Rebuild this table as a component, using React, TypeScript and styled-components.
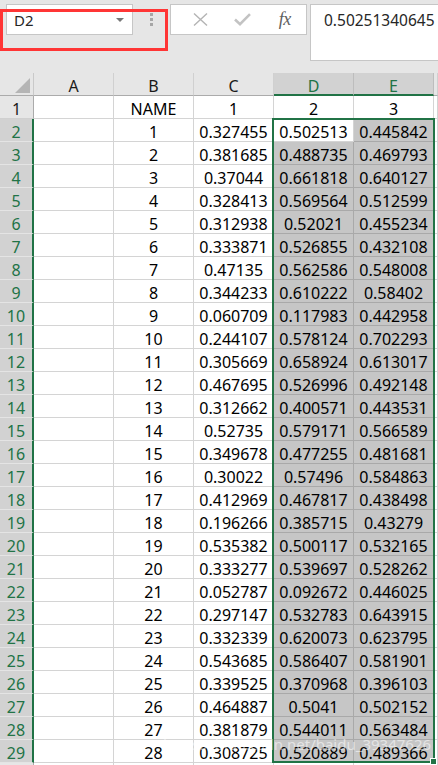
import React from "react";
import styled, { createGlobalStyle } from "styled-components";

const GREEN = "#217346";

const GlobalStyle = createGlobalStyle`
  html, body { margin: 0; padding: 0; overflow: hidden; background: #fff; }
  * { box-sizing: border-box; }
`;

const colC = [
  "0.327455", "0.381685", "0.37044", "0.328413", "0.312938", "0.333871", "0.47135",
  "0.344233", "0.060709", "0.244107", "0.305669", "0.467695", "0.312662", "0.52735",
  "0.349678", "0.30022", "0.412969", "0.196266", "0.535382", "0.333277", "0.052787",
  "0.297147", "0.332339", "0.543685", "0.339525", "0.464887", "0.381879", "0.308725",
];
const colD = [
  "0.502513", "0.488735", "0.661818", "0.569564", "0.52021", "0.526855", "0.562586",
  "0.610222", "0.117983", "0.578124", "0.658924", "0.526996", "0.400571", "0.579171",
  "0.477255", "0.57496", "0.467817", "0.385715", "0.500117", "0.539697", "0.092672",
  "0.532783", "0.620073", "0.586407", "0.370968", "0.5041", "0.544011", "0.520889",
];
const colE = [
  "0.445842", "0.469793", "0.640127", "0.512599", "0.455234", "0.432108", "0.548008",
  "0.58402", "0.442958", "0.702293", "0.613017", "0.492148", "0.443531", "0.566589",
  "0.481681", "0.584863", "0.438498", "0.43279", "0.532165", "0.528262", "0.446025",
  "0.643915", "0.623795", "0.581901", "0.396103", "0.502152", "0.563484", "0.489366",
];

const Frame = styled.div`
  position: relative;
  width: 438px;
  height: 765px;
  overflow: hidden;
  background: #e6e6e6;
  font-family: "Noto Sans", "Liberation Sans", sans-serif;
  color: #000;
`;

const Toolbar = styled.div`
  display: flex;
  align-items: flex-start;
  height: 73px;
  padding: 4px 0 0 6px;
`;

const NameBox = styled.div`
  display: flex;
  align-items: center;
  justify-content: space-between;
  width: 127px;
  height: 31px;
  padding: 0 8px 0 7px;
  background: #fff;
  border: 1px solid #c6c6c6;
  font-size: 15px;
  color: #262626;
`;

const Caret = styled.span`
  width: 0;
  height: 0;
  border-left: 4px solid transparent;
  border-right: 4px solid transparent;
  border-top: 4px solid #777;
  margin-top: 1px;
`;

const Grip = styled.div`
  display: flex;
  flex-direction: column;
  align-items: center;
  justify-content: center;
  gap: 2px;
  width: 37px;
  height: 31px;
`;

const GripDot = styled.span`
  width: 3px;
  height: 3px;
  background: #a6a6a6;
`;

const FuncBox = styled.div`
  display: flex;
  align-items: center;
  width: 137px;
  height: 31px;
  padding-left: 8px;
  background: #fff;
  border: 1px solid #c6c6c6;
`;

const IconSlot = styled.div`
  display: flex;
  align-items: center;
  justify-content: center;
  width: 45px;
  height: 100%;
`;

const FxLabel = styled.span`
  font-family: "Liberation Serif", "DejaVu Serif", serif;
  font-style: italic;
  font-size: 18px;
  color: #5e5e5e;
  letter-spacing: -0.5px;
`;

const FormulaBox = styled.div`
  flex: 1;
  height: 57px;
  margin-left: 3px;
  padding-left: 13px;
  background: #fff;
  border: 1px solid #c6c6c6;
  border-right: none;
  font-size: 15.5px;
  line-height: 30px;
  color: #262626;
  white-space: nowrap;
  overflow: hidden;
`;

const Sheet = styled.div`
  position: relative;
  display: grid;
  grid-template-columns: 34px repeat(5, 80px) 1fr;
  grid-auto-rows: 23px;
  background: #fff;
  font-size: 16px;
`;

const Corner = styled.div`
  display: flex;
  align-items: flex-end;
  justify-content: flex-end;
  padding: 0 3px 2px 0;
  background: #e6e6e6;
  border-right: 1px solid #c9c9c9;
  border-bottom: 1px solid #ababab;
`;

const SelectAll = styled.span`
  width: 0;
  height: 0;
  border-left: 15px solid transparent;
  border-bottom: 15px solid #b5b5b5;
`;

const ColHead = styled.div<{ $selected?: boolean }>`
  display: flex;
  align-items: center;
  justify-content: center;
  padding-top: 4px;
  background: ${(p) => (p.$selected ? "#d2d2d2" : "#e6e6e6")};
  border-right: 1px solid ${(p) => (p.$selected ? "#bdbdbd" : "#d0d0d0")};
  border-bottom: ${(p) => (p.$selected ? `2px solid ${GREEN}` : "1px solid #ababab")};
  color: ${(p) => (p.$selected ? GREEN : "#1a1a1a")};
  line-height: 18px;
`;

const RowHead = styled.div<{ $selected?: boolean }>`
  display: flex;
  align-items: center;
  justify-content: center;
  padding-top: 4px;
  background: ${(p) => (p.$selected ? "#d2d2d2" : "#e6e6e6")};
  border-right: ${(p) => (p.$selected ? `2px solid ${GREEN}` : "1px solid #ababab")};
  border-bottom: 1px solid ${(p) => (p.$selected ? "#e4e4e4" : "#d0d0d0")};
  color: ${(p) => (p.$selected ? GREEN : "#1a1a1a")};
  line-height: 18px;
`;

const Cell = styled.div<{ $shade?: boolean }>`
  display: flex;
  align-items: center;
  justify-content: center;
  padding-top: 4px;
  background: ${(p) => (p.$shade ? "#c6c6c6" : "#fff")};
  border-right: 1px solid ${(p) => (p.$shade ? "#a9a9a9" : "#d4d4d4")};
  border-bottom: 1px solid ${(p) => (p.$shade ? "#a9a9a9" : "#d4d4d4")};
  line-height: 18px;
  white-space: nowrap;
  overflow: hidden;
`;

const SelectionFrame = styled.div`
  position: absolute;
  grid-column: 5 / 7;
  grid-row: 3 / 31;
  top: -1px;
  left: -2px;
  right: -1px;
  bottom: 0;
  border: 2px solid ${GREEN};
  pointer-events: none;
`;

const FillHandle = styled.span`
  position: absolute;
  right: -4px;
  bottom: -4px;
  width: 7px;
  height: 7px;
  background: ${GREEN};
  border: 1px solid #fff;
`;

const Annotation = styled.div`
  position: absolute;
  left: 0;
  top: 9px;
  width: 168px;
  height: 42px;
  border: 3px solid #ff3535;
  pointer-events: none;
`;

const Watermark = styled.div`
  position: absolute;
  left: 163px;
  top: 734px;
  font-size: 15px;
  color: rgba(255, 255, 255, 0.55);
  white-space: nowrap;
  pointer-events: none;
`;

const CrossIcon = () => (
  <svg width="15" height="13" viewBox="0 0 15 13">
    <path d="M1 0.5 L14 12.5 M14 0.5 L1 12.5" stroke="#b4b4b4" strokeWidth="1.4" fill="none" />
  </svg>
);

const CheckIcon = () => (
  <svg width="17" height="13" viewBox="0 0 17 13">
    <path d="M1 6.5 L6 11.2 L16 1.2" stroke="#c3c3c3" strokeWidth="2.6" fill="none" />
  </svg>
);

export default function App() {
  const rows = Array.from({ length: 30 }, (_, i) => i + 1);
  return (
    <Frame>
      <GlobalStyle />
      <Toolbar>
        <NameBox>
          <span>D2</span>
          <Caret />
        </NameBox>
        <Grip>
          <GripDot />
          <GripDot />
          <GripDot />
        </Grip>
        <FuncBox>
          <IconSlot>
            <CrossIcon />
          </IconSlot>
          <IconSlot>
            <CheckIcon />
          </IconSlot>
          <IconSlot>
            <FxLabel>fx</FxLabel>
          </IconSlot>
        </FuncBox>
        <FormulaBox>0.50251340645</FormulaBox>
      </Toolbar>
      <Sheet>
        <Corner>
          <SelectAll />
        </Corner>
        {["A", "B", "C", "D", "E", "F"].map((c) => (
          <ColHead key={c} $selected={c === "D" || c === "E"}>
            {c === "F" ? "" : c}
          </ColHead>
        ))}
        {rows.map((r) => {
          const selected = r >= 2 && r <= 29;
          const i = r - 2;
          const b = r === 1 ? "NAME" : r <= 29 ? String(r - 1) : "";
          const c = r === 1 ? "1" : r <= 29 ? colC[i] : "";
          const d = r === 1 ? "2" : r <= 29 ? colD[i] : "";
          const e = r === 1 ? "3" : r <= 29 ? colE[i] : "";
          return (
            <React.Fragment key={r}>
              <RowHead $selected={selected}>{r <= 29 ? r : ""}</RowHead>
              <Cell />
              <Cell>{b}</Cell>
              <Cell>{c}</Cell>
              <Cell $shade={selected && r !== 2}>{d}</Cell>
              <Cell $shade={selected}>{e}</Cell>
              <Cell />
            </React.Fragment>
          );
        })}
        <SelectionFrame>
          <FillHandle />
        </SelectionFrame>
      </Sheet>
      <Annotation />
      <Watermark>https://blog.csdn.net/baidu_39347626</Watermark>
    </Frame>
  );
}
